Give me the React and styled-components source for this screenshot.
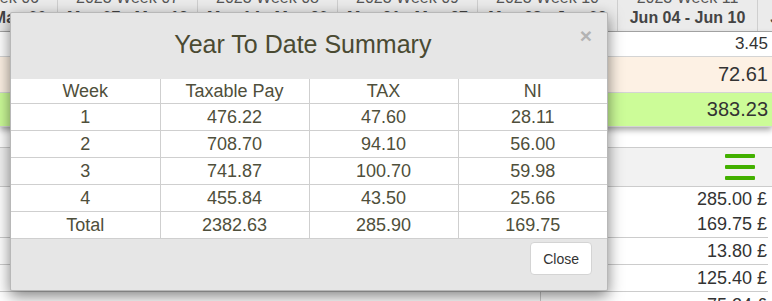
import React from "react";
import styled, { createGlobalStyle } from "styled-components";

const GlobalStyle = createGlobalStyle`
  body {
    margin: 0;
    overflow: hidden;
    background: #fff;
    font-family: "Liberation Sans", Arial, sans-serif;
  }
`;

const Page = styled.div`
  position: relative;
  width: 772px;
  height: 301px;
  overflow: hidden;
`;

const WeekHeader = styled.div`
  display: flex;
  margin: -13px 0 0 -82px;
  background: #ebebeb;
  border-bottom: 1px solid #a9a9a9;
`;

const WeekCell = styled.div`
  flex: 0 0 140px;
  box-sizing: border-box;
  border-right: 1px solid #cfcfcf;
  padding: 0 0 4px;
  text-align: center;
  font-size: 16px;
  line-height: 18px;
  color: #555;
  white-space: nowrap;
  overflow: hidden;
`;

const WeekName = styled.div`
  line-height: 22px;
`;

const WeekDates = styled.div`
  font-weight: 700;
  color: #444;
`;

const Summary = styled.div`
  position: relative;
  box-shadow: 0 3px 6px rgba(0, 0, 0, 0.35);
`;

const SummaryRow = styled.div`
  height: ${(p) => p.$height}px;
  line-height: ${(p) => p.$height}px;
  background: ${(p) => p.$bg};
  border-bottom: 1px solid #d4d4d4;
  padding-right: 4px;
  text-align: right;
  font-size: ${(p) => p.$size}px;
  color: #333;
`;

const MenuBar = styled.div`
  margin-top: 20px;
  height: 38px;
  background: #f2f2f2;
  border-top: 1px solid #ccc;
  border-bottom: 1px solid #ccc;
  display: flex;
  justify-content: flex-end;
  align-items: center;
  padding-right: 17px;
`;

const Burger = styled.div`
  display: flex;
  flex-direction: column;
  gap: 7px;
  margin-top: -1px;
`;

const BurgerBar = styled.span`
  display: block;
  width: 30px;
  height: 4px;
  background: #42b000;
  border-radius: 1px;
`;

const LowerTable = styled.div`
  width: 768px;
  display: grid;
  grid-template-columns: 1fr 228px;
`;

const LowerLabel = styled.div`
  border-bottom: 1px solid #ccc;
`;

const LowerValue = styled.div`
  border-left: 1px solid #ccc;
  border-bottom: 1px solid #ccc;
  text-align: right;
  padding-right: 1px;
  font-size: 18px;
  line-height: ${(p) => (p.$double ? 25 : 26)}px;
  color: #333;
`;

const Dialog = styled.div`
  position: absolute;
  top: 12px;
  left: 10px;
  width: 598px;
  box-sizing: border-box;
  background: #e6e6e6;
  border: 1px solid rgba(0, 0, 0, 0.2);
  border-radius: 2px;
  box-shadow: 0 5px 15px rgba(0, 0, 0, 0.5);
  color: #4f4f3b;
`;

const DialogHeader = styled.div`
  display: flex;
  align-items: flex-start;
  padding: 18px 15px 21px;
`;

const DialogTitle = styled.h4`
  flex: 1;
  margin: 0;
  text-align: center;
  font-size: 25px;
  font-weight: 400;
  line-height: 27px;
  color: #4a4a32;
`;

const CloseX = styled.button`
  border: 0;
  background: none;
  padding: 0;
  margin-top: -6px;
  font-family: inherit;
  font-size: 21px;
  font-weight: 700;
  line-height: 21px;
  color: #b3b3b3;
  cursor: pointer;
`;

const SummaryTable = styled.table`
  width: 100%;
  border-collapse: collapse;
  table-layout: fixed;
  background: #fff;
  font-size: 18px;
`;

const Row = styled.tr`
  border-bottom: 1px solid #cfcfcf;
`;

const Cell = styled.td`
  text-align: center;
  line-height: 20px;
  padding: ${(p) => (p.$head ? "2px 0" : "3px 0")};
  border-left: 1px solid #cfcfcf;
  &:first-child {
    border-left: 0;
  }
`;

const DialogFooter = styled.div`
  display: flex;
  justify-content: flex-end;
  padding: 3px 15px 15px;
`;

const CloseButton = styled.button`
  height: 33px;
  padding: 0 12px;
  background: #fff;
  border: 1px solid #d4d4d4;
  border-radius: 4px;
  font-family: inherit;
  font-size: 14px;
  color: #333;
`;

const weeks = [
  ["2023 Week 06", "Apr 30 - May 06"],
  ["2023 Week 07", "May 07 - May 13"],
  ["2023 Week 08", "May 14 - May 20"],
  ["2023 Week 09", "May 21 - May 27"],
  ["2023 Week 10", "May 28 - Jun 03"],
  ["2023 Week 11", "Jun 04 - Jun 10"],
  ["2023 Week 12", "Jun 11 - Jun 17"],
];

const rows = [
  ["1", "476.22", "47.60", "28.11"],
  ["2", "708.70", "94.10", "56.00"],
  ["3", "741.87", "100.70", "59.98"],
  ["4", "455.84", "43.50", "25.66"],
  ["Total", "2382.63", "285.90", "169.75"],
];

export default function App() {
  return (
    <Page>
      <GlobalStyle />
      <WeekHeader>
        {weeks.map(([week, dates]) => (
          <WeekCell key={week}>
            <WeekName>{week}</WeekName>
            <WeekDates>{dates}</WeekDates>
          </WeekCell>
        ))}
      </WeekHeader>

      <Summary>
        <SummaryRow $height={24} $size={17} $bg="#fff">3.45</SummaryRow>
        <SummaryRow $height={35} $size={20} $bg="#fdf1e4">72.61</SummaryRow>
        <SummaryRow $height={33} $size={20} $bg="#ccfc98">383.23</SummaryRow>
      </Summary>

      <MenuBar>
        <Burger>
          <BurgerBar />
          <BurgerBar />
          <BurgerBar />
        </Burger>
      </MenuBar>

      <LowerTable>
        <LowerLabel />
        <LowerValue $double>
          285.00 £<br />
          169.75 £
        </LowerValue>
        <LowerLabel />
        <LowerValue>13.80 £</LowerValue>
        <LowerLabel />
        <LowerValue>125.40 £</LowerValue>
        <LowerLabel />
        <LowerValue>75.24 £</LowerValue>
      </LowerTable>

      <Dialog>
        <DialogHeader>
          <DialogTitle>Year To Date Summary</DialogTitle>
          <CloseX>×</CloseX>
        </DialogHeader>
        <SummaryTable>
          <tbody>
            <Row>
              <Cell $head>Week</Cell>
              <Cell $head>Taxable Pay</Cell>
              <Cell $head>TAX</Cell>
              <Cell $head>NI</Cell>
            </Row>
            {rows.map((r) => (
              <Row key={r[0]}>
                {r.map((v, i) => (
                  <Cell key={i}>{v}</Cell>
                ))}
              </Row>
            ))}
          </tbody>
        </SummaryTable>
        <DialogFooter>
          <CloseButton>Close</CloseButton>
        </DialogFooter>
      </Dialog>
    </Page>
  );
}
